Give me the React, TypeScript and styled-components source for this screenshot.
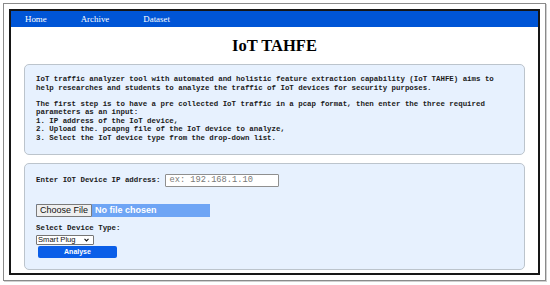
import React from "react";
import styled, { createGlobalStyle } from "styled-components";

const Global = createGlobalStyle`
  html, body { margin: 0; padding: 0; background: #ffffff; }
  * { box-sizing: border-box; }
`;

const Frame = styled.div`
  margin: 3px;
  width: 543px;
  height: 278px;
  border: 1px solid #8a8a8a;
  box-shadow: 1px 1px 0 #cfcfcf;
  padding: 5px;
  display: flex;
`;

const Page = styled.div`
  flex: 1;
  border: 2px solid #161616;
  display: flex;
  flex-direction: column;
  background: #fff;
`;

const Nav = styled.nav`
  height: 16px;
  background: #0055d6;
  display: flex;
  align-items: center;
  padding-left: 14px;
  gap: 34px;
`;

const NavLink = styled.a`
  font-family: "Liberation Serif", serif;
  font-size: 8.9px;
  color: #ffffff;
  text-decoration: none;
  line-height: 16px;
`;

const Title = styled.h1`
  margin: 9px 0 8px;
  font-family: "Liberation Serif", serif;
  font-weight: bold;
  font-size: 16.5px;
  line-height: 20px;
  text-align: center;
  color: #000;
`;

const Panel = styled.div<{ $pad: string; $top?: number }>`
  margin: ${(p) => p.$top ?? 0}px 13px 0;
  background: #e7f1fe;
  border: 1px solid #bcc4cc;
  border-radius: 5px;
  padding: ${(p) => p.$pad};
`;

const Mono = styled.p<{ $gap?: number }>`
  margin: 0 0 ${(p) => p.$gap ?? 0}px;
  font-family: "Liberation Mono", "Courier New", monospace;
  font-size: 7.42px;
  line-height: 8.6px;
  color: #1a1a1a;
  font-weight: bold;
  white-space: nowrap;
`;

const Row = styled.div`
  display: flex;
  align-items: center;
  gap: 5px;
  height: 13px;
`;

const TextInput = styled.input`
  width: 114px;
  height: 13px;
  border: 1px solid #8f8f8f;
  border-radius: 1px;
  padding: 0 3px;
  font-family: "Liberation Mono", "Courier New", monospace;
  font-size: 8.7px;
  background: #fff;
  outline: none;
  &::placeholder { color: #777; }
`;

const FileInput = styled.input`
  margin-top: 17px;
  width: 174px;
  height: 13px;
  padding: 0;
  background: #6ea5f5;
  color: #ffffff;
  font-family: "Liberation Sans", Arial, sans-serif;
  font-weight: bold;
  font-size: 9px;
  line-height: 13px;
  &::file-selector-button {
    height: 13px;
    margin: 0 3px 0 0;
    padding: 0 3px;
    background: #efefef;
    border: 1px solid #7a7a7a;
    border-radius: 1px;
    color: #111;
    font-family: "Liberation Sans", Arial, sans-serif;
    font-weight: normal;
    font-size: 9px;
    line-height: 11px;
  }
`;

const SelectLabel = styled.label`
  display: block;
  margin-top: 7.7px;
  font-family: "Liberation Mono", "Courier New", monospace;
  font-size: 7.42px;
  font-weight: bold;
  line-height: 8.6px;
  color: #1a1a1a;
`;

const SelectWrap = styled.div`
  position: relative;
  margin-top: 1.7px;
  width: 58px;
  height: 10px;
`;

const Select = styled.select`
  display: block;
  appearance: none;
  width: 58px;
  height: 10px;
  padding: 0 0 0 1px;
  border: 1px solid #767676;
  border-radius: 1px;
  font-family: "Liberation Sans", Arial, sans-serif;
  font-size: 7.6px;
  line-height: 8px;
  background: #fff;
  color: #111;
  outline: none;
`;

const Chevron = styled.svg`
  position: absolute;
  right: 5px;
  top: 3px;
  width: 5px;
  height: 4px;
  pointer-events: none;
`;

const Button = styled.button`
  display: block;
  margin: 1px 0 0 2px;
  width: 79px;
  height: 12px;
  padding: 0;
  border: none;
  border-radius: 2px;
  background: #0a5ee8;
  color: #fff;
  font-family: "Liberation Sans", Arial, sans-serif;
  font-weight: bold;
  font-size: 7px;
  line-height: 12px;
  text-align: center;
`;

const Label = styled.span`
  font-family: "Liberation Mono", "Courier New", monospace;
  font-size: 7.42px;
  font-weight: bold;
  line-height: 8.6px;
  color: #1a1a1a;
`;

export default function App() {
  return (
    <>
      <Global />
      <Frame>
        <Page>
          <Nav>
            <NavLink href="#">Home</NavLink>
            <NavLink href="#">Archive</NavLink>
            <NavLink href="#">Dataset</NavLink>
          </Nav>
          <Title>IoT TAHFE</Title>
          <Panel $pad="10px 11px 11px">
            <Mono $gap={7.4}>
              IoT traffic analyzer tool with automated and holistic feature extraction capability (IoT TAHFE) aims to
              <br />
              help researches and students to analyze the traffic of IoT devices for security purposes.
            </Mono>
            <Mono>
              The first step is to have a pre collected IoT traffic in a pcap format, then enter the three required
              <br />
              parameters as an input:
              <br />
              1. IP address of the IoT device,
              <br />
              2. Upload the. pcapng file of the IoT device to analyze,
              <br />
              3. Select the IoT device type from the drop-down list.
            </Mono>
          </Panel>
          <Panel $pad="10px 11px 11px" $top={8}>
            <Row>
              <Label>Enter IOT Device IP address:</Label>
              <TextInput placeholder="ex: 192.168.1.10" />
            </Row>
            <FileInput type="file" />
            <SelectLabel>Select Device Type:</SelectLabel>
            <SelectWrap>
              <Select defaultValue="plug">
                <option value="plug">Smart Plug</option>
                <option value="camera">Camera</option>
                <option value="bulb">Smart Bulb</option>
              </Select>
              <Chevron viewBox="0 0 5 4">
                <path d="M0.5 0.8 L2.5 2.9 L4.5 0.8" fill="none" stroke="#111" strokeWidth="1.1" />
              </Chevron>
            </SelectWrap>
            <Button>Analyse</Button>
          </Panel>
        </Page>
      </Frame>
    </>
  );
}
